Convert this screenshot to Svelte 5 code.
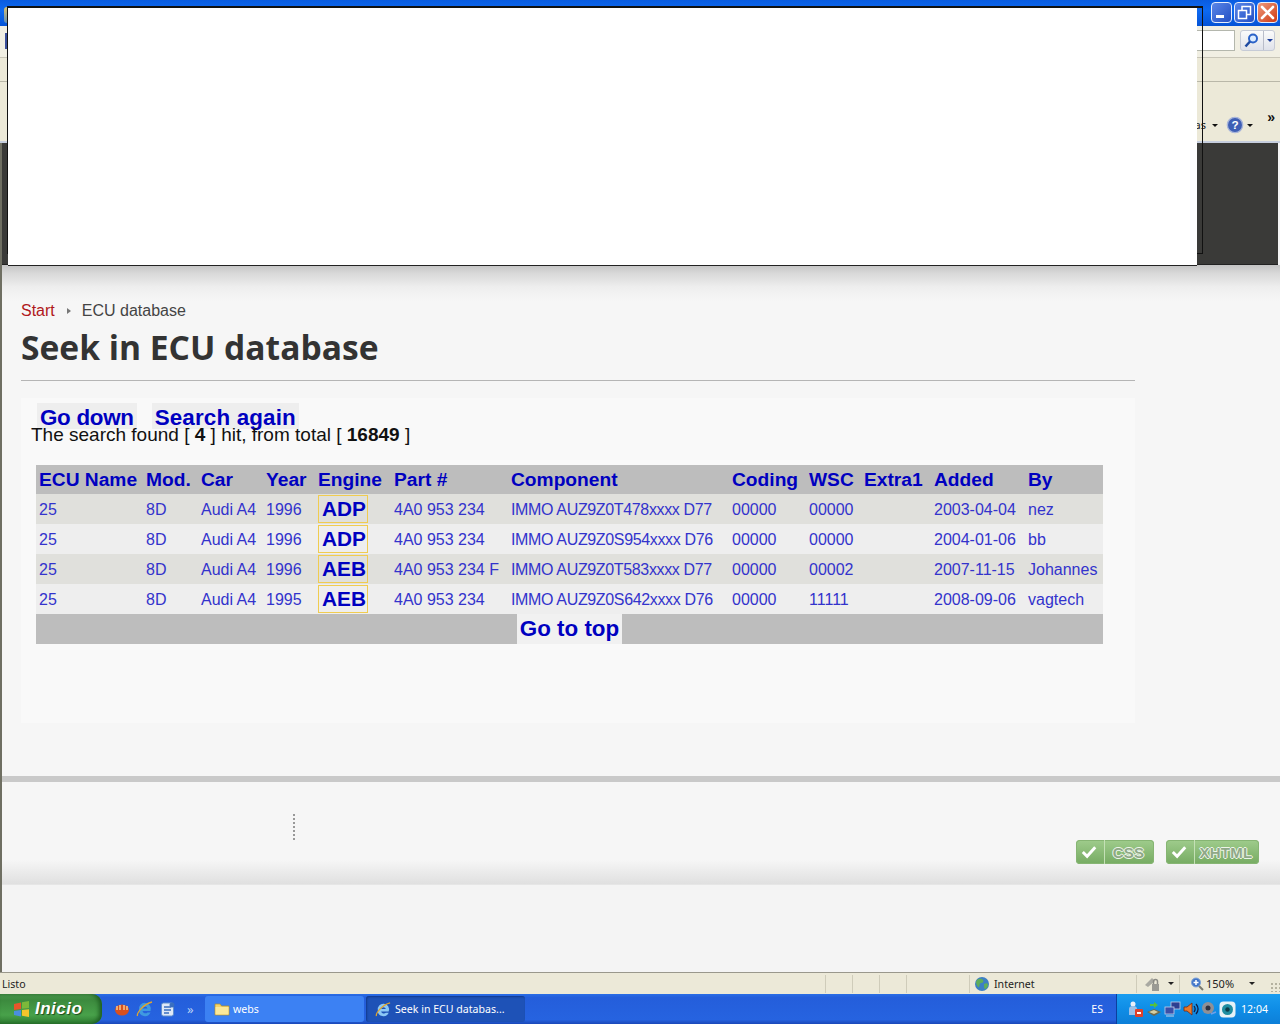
<script>
  const columns = [
    { label: "ECU Name", width: 107 },
    { label: "Mod.", width: 55 },
    { label: "Car", width: 65 },
    { label: "Year", width: 52 },
    { label: "Engine", width: 76 },
    { label: "Part #", width: 117 },
    { label: "Component", width: 221 },
    { label: "Coding", width: 77 },
    { label: "WSC", width: 55 },
    { label: "Extra1", width: 70 },
    { label: "Added", width: 94 },
    { label: "By", width: 78 },
  ];

  const rows = [
    ["25", "8D", "Audi A4", "1996", "ADP", "4A0 953 234", "IMMO AUZ9Z0T478xxxx D77", "00000", "00000", "", "2003-04-04", "nez"],
    ["25", "8D", "Audi A4", "1996", "ADP", "4A0 953 234", "IMMO AUZ9Z0S954xxxx D76", "00000", "00000", "", "2004-01-06", "bb"],
    ["25", "8D", "Audi A4", "1996", "AEB", "4A0 953 234 F", "IMMO AUZ9Z0T583xxxx D77", "00000", "00002", "", "2007-11-15", "Johannes"],
    ["25", "8D", "Audi A4", "1995", "AEB", "4A0 953 234", "IMMO AUZ9Z0S642xxxx D76", "00000", "11111", "", "2008-09-06", "vagtech"],
  ];
</script>

<div class="screen">
  <header class="titlebar">
    <i class="title-icon"></i>
    <button class="win-btn" aria-label="Minimizar">
      <svg width="21" height="21" viewBox="0 0 21 21"><rect x="5" y="13" width="8" height="3" fill="#fff" /></svg>
    </button>
    <button class="win-btn" aria-label="Restaurar">
      <svg width="21" height="21" viewBox="0 0 21 21" fill="none" stroke="#fff" stroke-width="1.5"><rect x="4.5" y="8.5" width="8" height="8" /><path d="M8 8V4.5h8.500v8H13" /></svg>
    </button>
    <button class="win-btn close" aria-label="Cerrar">
      <svg width="21" height="21" viewBox="0 0 21 21" stroke="#fff" stroke-width="2.600" stroke-linecap="round"><path d="M5 5l11 11M16 5L5 16" /></svg>
    </button>
  </header>

  <div class="addressbar">
    <i class="back-sliver"></i>
    <div class="search-input"></div>
    <div class="search-btn">
      <svg width="17" height="17" viewBox="0 0 17 17" fill="none"><circle cx="10" cy="6.500" r="4" stroke="#2a62c8" stroke-width="2" fill="#dcecff" /><path d="M7 9.500L2.500 14.500" stroke="#1d49a0" stroke-width="2.500" /></svg>
      <i class="sep"></i>
      <span class="mini-arrow blue"></span>
    </div>
  </div>

  <div class="linkbar"></div>

  <div class="toolbar">
    <span class="tool-text">tas</span>
    <span class="mini-arrow"></span>
    <svg class="help" width="18" height="18" viewBox="0 0 20 20">
      <circle cx="10" cy="10" r="8.500" fill="#3f5fb5" stroke="#a9b6da" stroke-width="1.500" />
      <text x="10" y="14.500" text-anchor="middle" class="help-mark">?</text>
    </svg>
    <span class="mini-arrow"></span>
    <span class="chevrons">»</span>
  </div>

  <main class="page">
    <div class="masthead"></div>

    <div class="content">
      <nav class="crumbs">
        <span class="start">Start</span>
        <i class="crumb-arrow"></i>
        <span>ECU database</span>
      </nav>
      <h1>Seek in ECU database</h1>

      <section class="panel">
        <div class="jump-links">
          <span class="jump down">Go down</span>
          <span class="jump again">Search again</span>
        </div>
        <p class="summary">The search found [ <b>4</b> ] hit, from total [ <b>16849</b> ]</p>

        <table>
          <colgroup>
            {#each columns as col}
              <col style="width: {col.width}px" />
            {/each}
          </colgroup>
          <thead>
            <tr>
              {#each columns as col}
                <th>{col.label}</th>
              {/each}
            </tr>
          </thead>
          <tbody>
            {#each rows as row}
              <tr>
                {#each row as cell, i}
                  {#if i === 4}
                    <td class="engine"><span class="engine-link">{cell}</span></td>
                  {:else if i === 6}
                    <td class="component">{cell}</td>
                  {:else}
                    <td>{cell}</td>
                  {/if}
                {/each}
              </tr>
            {/each}
          </tbody>
          <tfoot>
            <tr>
              <td colspan="12"><span class="top-link">Go to top</span></td>
            </tr>
          </tfoot>
        </table>
      </section>
    </div>

    <footer class="page-footer">
      <i class="dots"></i>
      <div class="badges">
        <span class="badge css">
          <svg width="28" height="20" viewBox="0 0 24 20"><path d="M5 10l4.500 4.500L18 5" fill="none" stroke="#fff" stroke-width="3" /></svg>
          <b>CSS</b>
        </span>
        <span class="badge xhtml">
          <svg width="28" height="20" viewBox="0 0 24 20"><path d="M5 10l4.500 4.500L18 5" fill="none" stroke="#fff" stroke-width="3" /></svg>
          <b>XHTML</b>
        </span>
      </div>
    </footer>
  </main>

  <div class="statusbar">
    <span class="cell status-main">Listo</span>
    <span class="cell narrow"></span>
    <span class="cell narrow"></span>
    <span class="cell narrow"></span>
    <span class="cell blank"></span>
    <div class="cell zone">
      <svg width="16" height="16" viewBox="0 0 16 16">
        <circle cx="8" cy="8" r="7" fill="#3d7fc4" />
        <path d="M3 4c3-2 5-1 6 0s0 3-2 3-1 3-2 4-3-3-3-5zM10 8c2-1 4-1 4 1s-2 4-3 4-1-4-1-5z" fill="#5fae5a" />
      </svg>
      <span>Internet</span>
    </div>
    <div class="cell security">
      <svg width="18" height="16" viewBox="0 0 18 16">
        <path d="M1 9l7-7 3 3-7 6z" fill="#a9a9a2" />
        <rect x="8" y="8" width="7" height="7" fill="#9a9a94" />
        <path d="M9.500 8V5.500a2 2 0 0 1 4 0V8" fill="none" stroke="#8b8b85" stroke-width="1.500" />
      </svg>
      <span class="mini-arrow dark"></span>
    </div>
    <div class="cell zoom">
      <svg width="14" height="14" viewBox="0 0 14 14">
        <circle cx="6" cy="5.500" r="4.500" fill="#3f74c8" stroke="#7ea2d8" />
        <path d="M3.500 5.500h5M6 3v5" stroke="#fff" stroke-width="1.500" />
        <path d="M9 9l4 4" stroke="#7a7a70" stroke-width="2" />
      </svg>
      <span class="zoom-text">150%</span>
      <span class="mini-arrow dark"></span>
      <i class="grip"></i>
    </div>
  </div>

  <div class="taskbar">
    <div class="start-btn">
      <svg width="19" height="19" viewBox="0 0 19 19">
        <path d="M2 4l7-1.500v6.500l-7 1z" fill="#e8552b" />
        <path d="M10 2.300L17 1v7l-7 .8z" fill="#7cb83a" />
        <path d="M2 11l7-1v6.500l-7-1.500z" fill="#4a8ee0" />
        <path d="M10 10l7-.8v7.800l-7-1.300z" fill="#f5c52c" />
      </svg>
      <span>Inicio</span>
    </div>
    <div class="quick">
      <svg width="16" height="16" viewBox="0 0 16 16">
        <ellipse cx="8" cy="9" rx="7" ry="5.500" fill="#d8501e" />
        <path d="M3 5v4M6 4v5M10 4v5M13 5v4" stroke="#f7c98a" stroke-width="1.500" />
      </svg>
      <svg width="18" height="18" viewBox="0 0 18 18">
        <path d="M3 10a6 6 0 1 1 11.500 1H6.500a3 3 0 0 0 5 1.500h3A6 6 0 0 1 3 10zm3.500-1.500h5a2.600 2.600 0 0 0-5 0z" fill="#3f9ae0" />
        <path d="M1.500 16c-1-3 6-12 14.500-14" fill="none" stroke="#e3a52c" stroke-width="1.300" />
      </svg>
      <svg width="16" height="16" viewBox="0 0 16 16">
        <rect x="1.500" y="2" width="12" height="13" rx="2" fill="#dfe9f7" stroke="#5f8fce" />
        <path d="M4 6h7M4 9h7M4 12h5" stroke="#3a6fc0" stroke-width="1.300" />
        <circle cx="12" cy="4" r="2.500" fill="#3a6fc0" />
      </svg>
      <span class="more">»</span>
    </div>
    <div class="task">
      <svg width="16" height="14" viewBox="0 0 16 14">
        <path d="M1 2h5l1.500 2H15v9H1z" fill="#f5d469" stroke="#b08d2a" stroke-width=".7" />
        <rect x="1.500" y="5" width="13" height="7.500" fill="#fbe89a" />
      </svg>
      <span>webs</span>
    </div>
    <div class="task active">
      <svg width="17" height="17" viewBox="0 0 18 18">
        <path d="M3 10a6 6 0 1 1 11.500 1H6.500a3 3 0 0 0 5 1.500h3A6 6 0 0 1 3 10zm3.500-1.500h5a2.600 2.600 0 0 0-5 0z" fill="#8cc8f5" />
        <path d="M1.500 16c-1-3 6-12 14.500-14" fill="none" stroke="#e3a52c" stroke-width="1.300" />
      </svg>
      <span>Seek in ECU databas...</span>
    </div>
    <span class="lang">ES</span>
    <div class="tray">
      <svg width="16" height="18" viewBox="0 0 16 18">
        <circle cx="5" cy="4" r="2.500" fill="#e8eef8" />
        <path d="M1 15V9a4 3 0 0 1 8 0v6z" fill="#9cc0e8" />
        <rect x="7" y="9" width="8" height="8" rx="1" fill="#e0402a" />
        <rect x="9" y="12" width="4" height="2" fill="#fff" />
      </svg>
      <svg width="16" height="16" viewBox="0 0 16 16">
        <path d="M8 1l4 3-4 3V5H4V3h4z" fill="#56c03c" />
        <path d="M1 11l7-3 7 3-7 4z" fill="#6f6a4c" />
        <path d="M3 11l5-2 4 2-4 2z" fill="#d6cfa3" />
      </svg>
      <svg width="17" height="16" viewBox="0 0 17 16">
        <rect x="7" y="1" width="9" height="7" fill="#2c3f92" stroke="#c6cfe8" stroke-width=".8" />
        <rect x="1" y="6" width="9" height="7" fill="#3a4fa8" stroke="#c6cfe8" stroke-width=".8" />
        <path d="M2 15h8" stroke="#c6cfe8" />
      </svg>
      <svg width="16" height="16" viewBox="0 0 16 16">
        <path d="M1 6h3l5-4v12l-5-4H1z" fill="#e9792a" stroke="#7a2a10" stroke-width=".8" />
        <path d="M11 5c1.500 2 1.500 4 0 6M13 3c2.500 3 2.500 7 0 10" fill="none" stroke="#111a40" stroke-width="1.200" />
      </svg>
      <svg width="16" height="16" viewBox="0 0 16 16">
        <circle cx="7" cy="7" r="6" fill="#8f9096" />
        <circle cx="7" cy="7" r="2.500" fill="#2c3142" />
        <path d="M10 13l5-2" stroke="#6fa0e8" stroke-width="1.500" />
      </svg>
      <svg width="17" height="17" viewBox="0 0 17 17">
        <rect x=".5" y=".5" width="16" height="16" rx="4" fill="#e6f1f6" />
        <circle cx="8.500" cy="8.500" r="5.500" fill="#1f8da0" />
        <circle cx="8.500" cy="8.500" r="2.200" fill="#0c3c48" />
      </svg>
      <span class="clock">12:04</span>
    </div>
  </div>

  <!-- blank popup lying over the browser chrome -->
  <div class="popup-frame"></div>
  <div class="popup"></div>
</div>

<style>
  :global(body) {
    margin: 0;
    background: #f4f4f4;
  }

  * {
    box-sizing: border-box;
  }

  .screen {
    position: relative;
    width: 1280px;
    height: 1024px;
    overflow: hidden;
    display: flex;
    flex-direction: column;
    font-family: "Liberation Sans", Arial, sans-serif;
  }

  .titlebar {
    height: 26px;
    flex-shrink: 0;
    display: flex;
    justify-content: flex-end;
    align-items: center;
    gap: 2px;
    padding: 0 2px 2px 0;
    background: linear-gradient(#0a5ce0 0, #0d6af2 40%, #0553d6 100%);
  }

  .title-icon {
    width: 4px;
    height: 16px;
    margin: 6px auto 0 4px;
    border-radius: 3px 0 0 3px;
    background: linear-gradient(#d8c070, #5f8fb8);
  }

  .win-btn {
    width: 21px;
    height: 21px;
    padding: 0;
    border: 1px solid #e6eefc;
    border-radius: 4px;
    background: linear-gradient(135deg, #5a86e8, #2350c4);
    display: block;
  }

  .win-btn svg {
    display: block;
    margin: -1px;
  }

  .win-btn.close {
    background: linear-gradient(135deg, #ee9a7c, #cf3a12);
  }

  .addressbar {
    height: 32px;
    flex-shrink: 0;
    display: flex;
    justify-content: flex-end;
    align-items: center;
    gap: 5px;
    padding: 0 5px 2px 0;
    background: #f1efe3;
    border-bottom: 1px solid #c9c6b8;
  }

  .back-sliver {
    width: 2px;
    height: 16px;
    margin: 0 auto 0 5px;
    background: #3a4f9a;
  }

  .search-input {
    width: 40px;
    height: 21px;
    background: #fff;
    border: 1px solid #b4b7ad;
  }

  .search-btn {
    width: 35px;
    height: 21px;
    display: flex;
    align-items: center;
    gap: 3px;
    padding-left: 2px;
    border: 1px solid #c6cbd6;
    border-radius: 3px;
    background: linear-gradient(#fbfbfb, #dfe2ea);
  }

  .sep {
    width: 1px;
    height: 19px;
    background: #b9bdc9;
  }

  .mini-arrow {
    width: 0;
    height: 0;
    border-left: 3px solid transparent;
    border-right: 3px solid transparent;
    border-top: 3px solid #111;
    display: inline-block;
  }

  .mini-arrow.blue {
    border-top-color: #1d3f9c;
  }

  .mini-arrow.dark {
    border-top-color: #222;
  }

  .linkbar {
    height: 24px;
    flex-shrink: 0;
    background: #ece9d8;
    border-bottom: 1px solid #b9b7a8;
  }

  .toolbar {
    height: 61px;
    flex-shrink: 0;
    position: relative;
    display: flex;
    justify-content: flex-end;
    align-items: flex-end;
    gap: 3px;
    padding: 0 27px 7px 0;
    background: #ece9d8;
    border-bottom: 2px solid #c6cede;
    font-family: "Noto Sans", sans-serif;
    font-size: 11px;
    color: #222;
  }

  .toolbar .mini-arrow {
    margin-bottom: 7px;
  }

  .tool-text {
    line-height: 18px;
    margin-right: 3px;
  }

  .help {
    margin-left: 5px;
  }

  .help-mark {
    font: bold 13px "Liberation Sans", sans-serif;
    fill: #fff;
  }

  .chevrons {
    position: absolute;
    right: 5px;
    top: 28px;
    font: bold 14px/14px "Liberation Sans", sans-serif;
    color: #111;
  }

  .page {
    flex: 1;
    min-height: 0;
    display: flex;
    flex-direction: column;
    border-left: 2px solid #6f6f62;
    background: #f4f4f4;
  }

  .masthead {
    height: 122px;
    flex-shrink: 0;
    margin-right: 2px;
    background: #3a3a38;
    border-bottom: 1px solid #222;
  }

  .content {
    height: 517px;
    flex-shrink: 0;
    padding: 36px 145px 0 19px;
    background: linear-gradient(#c4c4c4 0, #d8d8d8 8px, #eeeeee 22px, #f6f6f6 36px);
    border-bottom: 6px solid #c9c9c9;
  }

  .crumbs {
    display: flex;
    align-items: center;
    height: 20px;
    font-size: 16px;
    color: #444;
  }

  .start {
    color: #b01820;
  }

  .crumb-arrow {
    width: 0;
    height: 0;
    margin: 0 11px 0 12px;
    border-top: 3px solid transparent;
    border-bottom: 3px solid transparent;
    border-left: 4px solid #777;
  }

  h1 {
    margin: 4px 0 0;
    height: 56px;
    font: bold 33.600px/44px "Open Sans", sans-serif;
    color: #333;
    border-bottom: 1px solid #b5b5b5;
    white-space: nowrap;
  }

  .panel {
    margin-top: 17px;
    height: 325px;
    padding: 5px 0 0 10px;
    background: #f9f9f9;
  }

  .jump-links {
    height: 21px;
    padding-left: 6px;
    display: flex;
    gap: 15px;
    font-size: 22.400px;
    font-weight: bold;
    line-height: 30px;
    color: #0000c0;
  }

  .jump {
    height: 26px;
    padding: 0 3px;
    background: #eeeeee;
  }

  .jump.down {
    letter-spacing: -0.3px;
  }

  .jump.again {
    letter-spacing: 0.15px;
  }

  .summary {
    position: relative;
    margin: 0;
    height: 41px;
    font-size: 19px;
    line-height: 22px;
    color: #111;
  }

  table {
    width: 1067px;
    margin-left: 5px;
    border-collapse: collapse;
    table-layout: fixed;
    color: #3333cc;
    font-size: 16px;
  }

  th {
    height: 29px;
    padding: 0 0 0 3px;
    text-align: left;
    font-size: 19.200px;
    font-weight: bold;
    color: #0000c0;
    background: #bdbdbd;
    white-space: nowrap;
  }

  td {
    height: 30px;
    padding: 1px 0 0 3px;
    white-space: nowrap;
  }

  td.component {
    letter-spacing: -0.35px;
  }

  tbody tr:nth-child(odd) td {
    background: #e0e0dc;
  }

  tbody tr:nth-child(even) td {
    background: #eeeeee;
  }

  td.engine {
    padding-top: 0;
  }

  .engine-link {
    display: inline-block;
    height: 28px;
    padding: 0 1px 0 3px;
    border: 1px solid #f0cc50;
    font-size: 20.800px;
    font-weight: bold;
    line-height: 26px;
    color: #0000c0;
    vertical-align: middle;
  }

  tfoot td {
    padding: 0;
    text-align: center;
    background: #bdbdbd;
  }

  .top-link {
    display: inline-block;
    height: 30px;
    padding: 0 3px;
    background: #f1f1f1;
    font-size: 22.400px;
    font-weight: bold;
    line-height: 30px;
    color: #0000c0;
    vertical-align: top;
  }

  .page-footer {
    height: 103px;
    flex-shrink: 0;
    display: flex;
    padding-top: 32px;
    background: linear-gradient(#f6f6f6 0, #f6f6f6 78px, #e0e0e0 102px);
    border-bottom: 1px solid #e6e6e6;
  }

  .dots {
    width: 2px;
    height: 26px;
    margin-left: 291px;
    border-left: 2px dotted #999;
  }

  .badges {
    margin-left: auto;
    margin-top: 26px;
    padding-right: 21px;
    display: flex;
    gap: 12px;
  }

  .badge {
    height: 24px;
    padding-left: 1px;
    display: flex;
    align-items: center;
    border-radius: 4px;
    background: linear-gradient(#9fcc8c, #76ab62);
    box-shadow: inset 0 0 0 1px #86b573;
  }

  .badge.css {
    width: 78px;
  }

  .badge.xhtml {
    width: 93px;
  }

  .badge svg {
    flex-shrink: 0;
    border-right: 1px solid #c4e0b6;
    height: 24px;
    padding: 2px 3px 2px 1px;
  }

  .badge b {
    flex: 1;
    padding-right: 2px;
    text-align: center;
    font-size: 15px;
    letter-spacing: 0.3px;
    color: #8fa888;
    text-shadow:
      1px 0 0 #edf5e8,
      -1px 0 0 #edf5e8,
      0 1px 0 #edf5e8,
      0 -1px 0 #edf5e8;
  }

  .statusbar {
    height: 22px;
    flex-shrink: 0;
    display: flex;
    align-items: center;
    background: #ece9d8;
    border-top: 1px solid #9a988c;
    font-family: "Noto Sans", sans-serif;
    font-size: 10.600px;
    color: #222;
  }

  .cell {
    height: 18px;
    flex-shrink: 0;
    display: flex;
    align-items: center;
    border-right: 1px solid #cfccba;
  }

  .status-main {
    width: 826px;
    padding-left: 2px;
  }

  .narrow {
    width: 27px;
  }

  .blank {
    width: 63px;
  }

  .zone {
    width: 167px;
    gap: 4px;
    padding-left: 4px;
  }

  .security {
    width: 43px;
    gap: 6px;
    padding-left: 7px;
  }

  .zoom {
    flex: 1;
    min-width: 0;
    padding-left: 10px;
    border-right: 0;
  }

  .zoom-text {
    margin-left: 2px;
    font-size: 11px;
  }

  .zoom .mini-arrow {
    margin-left: 15px;
  }

  .grip {
    width: 10px;
    height: 10px;
    margin: 6px 0 0 auto;
    background-image: radial-gradient(#b5b2a0 1px, transparent 1px);
    background-size: 4px 4px;
  }

  .taskbar {
    height: 30px;
    flex-shrink: 0;
    display: flex;
    align-items: center;
    background: linear-gradient(#2a6ee6 0, #245edb 12%, #2663e0 85%, #1a48b8 100%);
    font-family: "Noto Sans", sans-serif;
    font-size: 10.600px;
    color: #fff;
  }

  .start-btn {
    width: 102px;
    height: 30px;
    flex-shrink: 0;
    display: flex;
    align-items: center;
    gap: 4px;
    padding-left: 12px;
    border-radius: 0 10px 10px 0;
    background: linear-gradient(#4e9a50 0, #3c8a3e 20%, #48a14a 70%, #2d7a30 100%);
    box-shadow: inset -3px 0 4px #1f5f22;
    font: italic bold 17px "Liberation Sans", sans-serif;
    letter-spacing: 0.5px;
    text-shadow: 1px 1px 1px #1d4a1d;
  }

  .quick {
    width: 103px;
    flex-shrink: 0;
    display: flex;
    align-items: center;
    gap: 6px;
    padding-left: 12px;
  }

  .more {
    margin-left: 5px;
    font-size: 13px;
    color: #b8d0f5;
  }

  .task {
    width: 159px;
    height: 26px;
    flex-shrink: 0;
    margin-right: 2px;
    display: flex;
    align-items: center;
    gap: 3px;
    padding-left: 9px;
    border-radius: 3px;
    background: #3c81f3;
  }

  .task.active {
    background: #1e52b7;
    box-shadow: inset 1px 1px 2px #123a8c;
  }

  .lang {
    margin-left: auto;
    margin-right: 13px;
  }

  .tray {
    width: 164px;
    height: 30px;
    flex-shrink: 0;
    display: flex;
    align-items: center;
    gap: 2px;
    padding-left: 11px;
    background: linear-gradient(#1a9df0 0, #0f8de6 50%, #0d7fd8 100%);
    border-left: 1px solid #0c3f9e;
  }

  .clock {
    margin-left: 3px;
  }

  .popup-frame {
    position: absolute;
    left: 7px;
    top: 6px;
    width: 1196px;
    height: 248px;
    border: 1px solid #111;
    border-top-width: 2px;
  }

  .popup {
    position: absolute;
    left: 8px;
    top: 8px;
    width: 1189px;
    height: 258px;
    background: #fff;
    border-bottom: 1px solid #222;
  }
</style>
